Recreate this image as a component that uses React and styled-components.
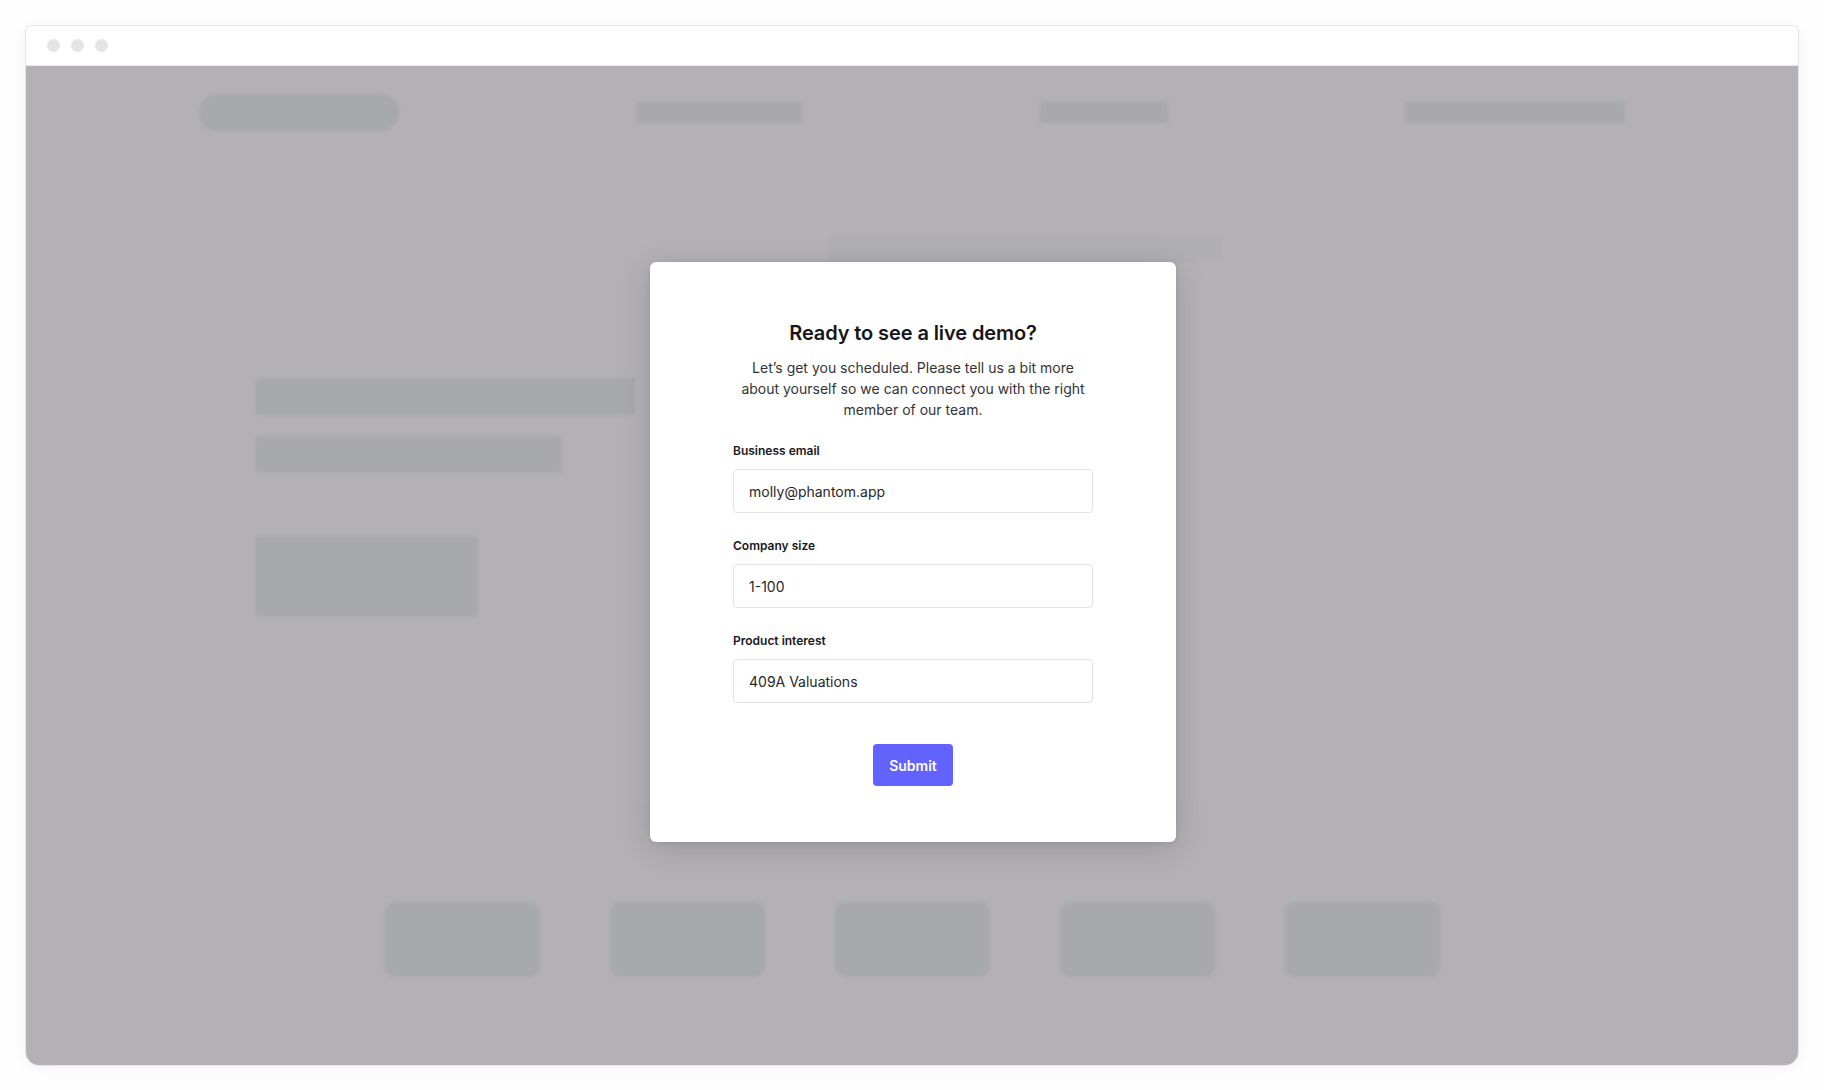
import React from 'react';
import styled, { createGlobalStyle } from 'styled-components';

const GlobalStyle = createGlobalStyle`
body {
    margin: 0;
    background: #fefefe;
    font-family: Inter, "Noto Sans", "Liberation Sans", sans-serif;
    -webkit-font-smoothing: antialiased;
}
* {
    box-sizing: border-box;
}
`;

const Page = styled.div`
padding: 25px 25px 24px 25px;
`;

const BrowserWindow = styled.div`
height: 1041px;
display: flex;
flex-direction: column;
border: 1px solid #e7e6ea;
border-radius: 6px 6px 14px 14px;
box-shadow: 0 2px 14px rgba(20, 20, 40, 0.05);
overflow: hidden;
background: #ffffff;
`;

const TitleBar = styled.div`
height: 40px;
flex-shrink: 0;
display: flex;
align-items: center;
gap: 11px;
padding-left: 21px;
border-bottom: 1px solid #e8e8ea;
`;

const Dot = styled.span`
width: 13px;
height: 13px;
border-radius: 50%;
background: #e5e5e8;
`;

const Viewport = styled.div`
position: relative;
flex: 1;
background: #b3b1b4;
overflow: hidden;
`;

const Backdrop = styled.div`
display: flex;
flex-direction: column;
height: 100%;
filter: blur(1.5px);
`;

const Nav = styled.div`
display: flex;
align-items: center;
justify-content: space-between;
padding: 28px 173px 0 173px;
height: 65px;
`;

const Skeleton = styled.div`
width: ${props => props.w}px;
height: ${props => props.h}px;
border-radius: ${props => props.r || 4}px;
background: #a8a9ad;
flex-shrink: 0;
`;

const Hero = styled.div`
display: flex;
align-items: flex-start;
padding-left: 229px;
margin-top: 96px;
height: 580px;
`;

const HeroText = styled.div`
display: flex;
flex-direction: column;
gap: 21px;
padding-top: 151px;
width: 380px;
`;

const HeroButton = styled(Skeleton)`
margin-top: 42px;
`;

const HeroVisual = styled.div`
width: 646px;
height: 576px;
background: #b4b2b5;
border-radius: 8px;
display: flex;
justify-content: flex-end;
padding: 6px 58px 0 0;
`;

const VisualStrip = styled.div`
width: 394px;
height: 30px;
background: #b0afb2;
border-radius: 4px;
`;

const CardRow = styled.div`
display: flex;
justify-content: center;
gap: 70px;
margin-top: 95px;
`;

const Overlay = styled.div`
position: absolute;
inset: 0;
display: flex;
justify-content: center;
align-items: flex-start;
padding: 196px 0 0 2px;
`;

const Modal = styled.div`
width: 526px;
background: #ffffff;
border-radius: 6px;
box-shadow: 0 6px 30px rgba(30, 30, 40, 0.18), 0 1px 4px rgba(30, 30, 40, 0.08);
padding: 57px 83px 56px 83px;
display: flex;
flex-direction: column;
align-items: center;
`;

const Title = styled.h2`
margin: 0;
font-size: 20px;
line-height: 28px;
font-weight: 600;
color: #161618;
letter-spacing: -0.1px;
`;

const Intro = styled.p`
margin: 10px 0 0 0;
max-width: 350px;
text-align: center;
font-size: 14px;
line-height: 21px;
color: #333338;
`;

const Form = styled.form`
width: 360px;
margin-top: 23px;
display: flex;
flex-direction: column;
gap: 25px;
`;

const Field = styled.div`
display: flex;
flex-direction: column;
`;

const Label = styled.label`
font-size: 12px;
line-height: 16px;
font-weight: 600;
color: #18181b;
margin-bottom: 10px;
`;

const Input = styled.input`
height: 44px;
width: 100%;
border: 1px solid #e3e3e7;
border-radius: 4px;
padding: 0 15px;
font-family: inherit;
font-size: 14px;
color: #27272a;
background: #ffffff;
outline: none;
`;

const SubmitButton = styled.button`
margin-top: 41px;
width: 80px;
height: 42px;
border: none;
border-radius: 4px;
background: #6262ff;
color: #ffffff;
font-family: inherit;
font-size: 14px;
font-weight: 600;
cursor: pointer;
`;

const fields = [
    { id: 'email', label: 'Business email', value: 'molly@phantom.app' },
    { id: 'size', label: 'Company size', value: '1-100' },
    { id: 'product', label: 'Product interest', value: '409A Valuations' },
];

const App = () => {
    return (
        <Page>
            <GlobalStyle />
            <BrowserWindow>
                <TitleBar>
                    <Dot />
                    <Dot />
                    <Dot />
                </TitleBar>
                <Viewport>
                    <Backdrop>
                        <Nav>
                            <Skeleton w={200} h={37} r={18} />
                            <Skeleton w={166} h={21} r={3} />
                            <Skeleton w={128} h={21} r={3} />
                            <Skeleton w={220} h={21} r={3} />
                        </Nav>
                        <Hero>
                            <HeroText>
                                <Skeleton w={386} h={37} />
                                <Skeleton w={307} h={37} />
                                <HeroButton w={223} h={81} />
                            </HeroText>
                            <HeroVisual>
                                <VisualStrip />
                            </HeroVisual>
                        </Hero>
                        <CardRow>
                            {[0, 1, 2, 3, 4].map(i => (
                                <Skeleton key={i} w={155} h={75} r={10} />
                            ))}
                        </CardRow>
                    </Backdrop>
                    <Overlay>
                        <Modal>
                            <Title>Ready to see a live demo?</Title>
                            <Intro>
                                Let’s get you scheduled. Please tell us a bit more about yourself so we can connect you with the right member of our team.
                            </Intro>
                            <Form onSubmit={e => e.preventDefault()}>
                                {fields.map(f => (
                                    <Field key={f.id}>
                                        <Label htmlFor={f.id}>{f.label}</Label>
                                        <Input id={f.id} defaultValue={f.value} />
                                    </Field>
                                ))}
                            </Form>
                            <SubmitButton type="button">Submit</SubmitButton>
                        </Modal>
                    </Overlay>
                </Viewport>
            </BrowserWindow>
        </Page>
    );
};

export default App;
